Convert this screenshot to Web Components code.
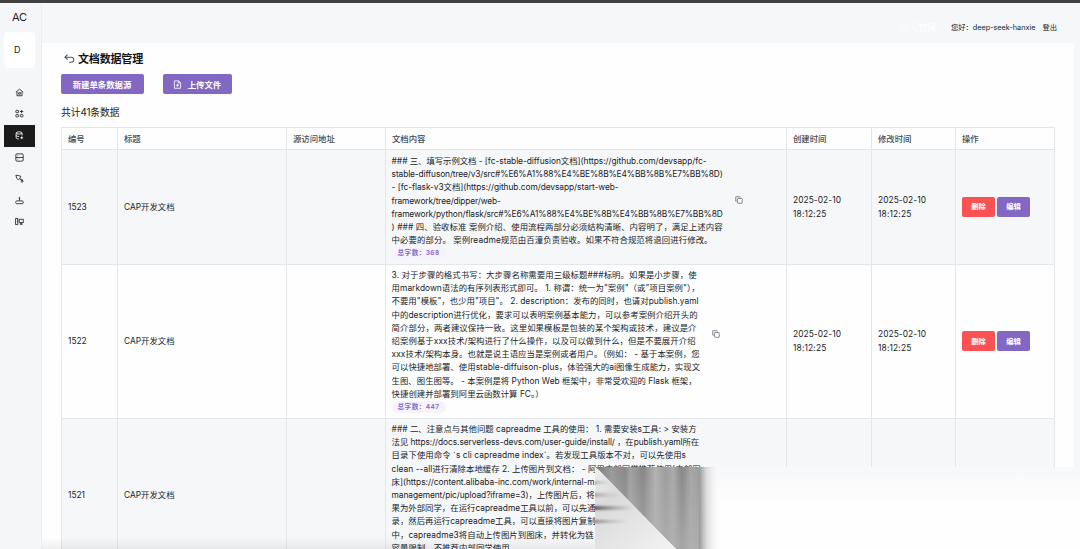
<!DOCTYPE html>
<html lang="zh-CN">
<head>
<meta charset="utf-8">
<title>文档数据管理</title>
<style>
  body {
    margin: 0;
    overflow: hidden;
    background: #f6f7f9;
    color: #202327;
    font-family: Inter, "Noto Sans CJK SC", sans-serif;
    font-size: 8.4px;
  }
</style>
</head>
<body>
<admin-page></admin-page>

<script>
const ROWS = [
  {
    id: '1523',
    title: 'CAP开发文档',
    count: 368,
    height: 115,
    time: ['2025-02-10', '18:12:25'],
    lines: [
      ['### 三、填写示例文档 - [fc-stable-diffusion文档](https://github.com/devsapp/fc-', 315],
      ['stable-diffuson/tree/v3/src#%E6%A1%88%E4%BE%8B%E4%BB%8B%E7%BB%8D)', 331],
      ['- [fc-flask-v3文档](https://github.com/devsapp/start-web-', 227],
      ['framework/tree/dipper/web-', 109],
      ['framework/python/flask/src#%E6%A1%88%E4%BE%8B%E4%BB%8B%E7%BB%8D', 331],
      [') ### 四、验收标准 案例介绍、使用流程两部分必须结构清晰、内容明了，满足上述内容', 331],
      ['中必要的部分。 案例readme规范由百潼负责验收。如果不符合规范将退回进行修改。', 321]
    ]
  },
  {
    id: '1522',
    title: 'CAP开发文档',
    count: 447,
    height: 154,
    time: ['2025-02-10', '18:12:25'],
    lines: [
      ['3. 对于步骤的格式书写：大步骤名称需要用三级标题###标明。如果是小步骤，使', 305],
      ['用markdown语法的有序列表形式即可。 1. 称谓：统一为"案例"（或"项目案例"），', 308],
      ['不要用"模板"，也少用"项目"。 2. description：发布的同时，也请对publish.yaml', 307],
      ['中的description进行优化，要求可以表明案例基本能力，可以参考案例介绍开头的', 306],
      ['简介部分，两者建议保持一致。这里如果模板是包装的某个架构或技术，建议是介', 305],
      ['绍案例基于xxx技术/架构进行了什么操作，以及可以做到什么，但是不要展开介绍', 304],
      ['xxx技术/架构本身。也就是说主语应当是案例或者用户。（例如： - 基于本案例，您', 308],
      ['可以快捷地部署、使用stable-diffuison-plus，体验强大的ai图像生成能力，实现文', 308.5],
      ['生图、图生图等。 - 本案例是将 Python Web 框架中，非常受欢迎的 Flask 框架，', 305],
      ['快捷创建并部署到阿里云函数计算 FC。）', 152]
    ]
  },
  {
    id: '1521',
    title: 'CAP开发文档',
    height: 154,
    lines: [
      ['### 二、注意点与其他问题 capreadme 工具的使用： 1. 需要安装s工具: > 安装方', 305],
      ['法见 https://docs.serverless-devs.com/user-guide/install/ ，在publish.yaml所在', 307.5],
      ['目录下使用命令 `s cli capreadme index`。若发现工具版本不对，可以先使用s', 294.5],
      ['clean --all进行清除本地缓存 2. 上传图片到文档： - 阿里内部同学推荐使用[内部图', 309],
      ['床](https://content.alibaba-inc.com/work/internal-m', 203],
      ['management/pic/upload?iframe=3)，上传图片后，将', 203],
      ['果为外部同学，在运行capreadme工具以前，可以先通', 204],
      ['录，然后再运行capreadme工具，可以直接将图片复制', 204],
      ['中，capreadme3将自动上传图片到图床，并转化为链', 202],
      ['容量限制，不推荐内部同学使用', 118]
    ]
  }
];

const ICONS = {
  home: '<path d="M1.5 7.5 8 2l6.5 5.5M3.5 6.5v7.3h9V6.5"/><path d="M6.5 8.3h3v2.6h-3z"/>',
  apps: '<rect x="1.5" y="2.5" width="4.8" height="4" rx="1"/><rect x="1.5" y="10" width="4.8" height="4" rx="1"/><rect x="9.4" y="10" width="4.8" height="4" rx="1"/><path d="M11.8 1.5v6M8.8 4.5h6"/>',
  data: '<ellipse cx="7.3" cy="3.5" rx="5.3" ry="2"/><path d="M2 3.5v8.7c0 1 2 1.8 4.8 2M12.6 3.5V8M2 7.8c0 1.3 2.8 2 5.3 1.9M12 9.5v5M9.5 12h5"/>',
  table: '<rect x="1.5" y="1.5" width="13" height="13" rx="2"/><path d="M1.5 8h13M4.5 5h1M4.5 11h1"/>',
  tool: '<path d="m1.5 2.2 4 .5 4.6 1.2-.6 3-3.5 3.5-3-2.7zM8 8l3.3 3.3"/><circle cx="12.5" cy="12.8" r="1.8"/><path d="m10.5 8.5 3.8 3"/>',
  tray: '<path d="M3 8.7h10c2.4 0 2.4 5 0 5H3c-2.4 0-2.4-5 0-5zM8 8.3V4.5"/><circle cx="8" cy="3.5" r="1"/>',
  device: '<path d="M1 2.5h4v11H1zM3.5 5H5M3.5 8H5M7.5 4h7.3v6H7.5zM9 13l2-3 2 3z"/>',
  back: '<path d="M5.3 2.5 1.2 6.1l4.1 3.7M1.5 6.1h9a3.6 3.6 0 0 1 0 7.4H7.6"/>',
  file: '<path d="M2.5 1.5h7.3L13.5 5v9.7h-11zM9.5 1.5V5.3h4M8 6.5v5.6M5.2 9.3h5.6"/>',
  copy: '<rect x="5" y="5" width="9.5" height="9.5" rx="1.2"/><path d="M3 10.5H1.5v-9h9V3"/>'
};

customElements.define('line-icon', class extends HTMLElement {
  connectedCallback() {
    this.attachShadow({ mode: 'open' }).innerHTML = `
      <style>
        :host { display: block; flex: none; width: var(--size, 9px); height: var(--size, 9px); }
        svg { display: block; width: 100%; height: 100%; fill: none; stroke: currentColor; stroke-width: 1.5; }
      </style>
      <svg viewBox="0 0 16 16">${ICONS[this.getAttribute('name')]}</svg>`;
  }
});

// one line of text, tracked so that it fills the given width
customElements.define('text-line', class extends HTMLElement {
  connectedCallback() {
    this.attachShadow({ mode: 'open' }).innerHTML = `
      <style>
        :host { display: block; }
        span { white-space: pre; }
      </style>
      <span><slot></slot></span>`;
    const width = parseFloat(this.getAttribute('width'));
    if (!width) return;
    const span = this.shadowRoot.querySelector('span');
    const natural = span.getBoundingClientRect().width;
    span.style.letterSpacing = (width - natural) / this.textContent.length + 'px';
  }
});

customElements.define('app-button', class extends HTMLElement {
  connectedCallback() {
    this.attachShadow({ mode: 'open' }).innerHTML = `
      <style>
        :host {
          display: flex;
          align-items: center;
          justify-content: center;
          gap: 6px;
          box-sizing: border-box;
          width: 33px;
          height: 20px;
          border-radius: 2px;
          background: #8268c2;
          color: #fff;
          font-size: 7.3px;
          font-weight: 600;
        }
        :host([kind=danger]) { background: #fa5252; }
        :host([large]) { font-size: 8.4px; padding-right: 1px; }
      </style>
      <slot></slot>`;
  }
});

customElements.define('side-bar', class extends HTMLElement {
  connectedCallback() {
    const names = ['home', 'apps', 'data', 'table', 'tool', 'tray', 'device'];
    this.attachShadow({ mode: 'open' }).innerHTML = `
      <style>
        :host {
          display: flex;
          flex-direction: column;
          box-sizing: border-box;
          width: 42px;
          padding-left: 4px;
          border-right: 1px solid #eceef0;
          background: #f5f6f8;
        }
        .logo { width: 31px; height: 29px; line-height: 28px; text-align: center; font-size: 11px; }
        .team {
          width: 31px;
          height: 36px;
          margin-bottom: 14px;
          border-radius: 4px;
          background: #fff;
          line-height: 36px;
          text-indent: 10px;
          font-size: 9px;
        }
        .item { display: grid; place-items: center; box-sizing: border-box; width: 31px; height: 21.6px; padding-bottom: 1px; }
        .item.active { background: #1b1b1c; color: #fff; }
      </style>
      <div class="logo">AC</div>
      <div class="team">D</div>
      ${names.map(name => `<div class="item ${name == 'data' ? 'active' : ''}"><line-icon name="${name}"></line-icon></div>`).join('')}`;
  }
});

customElements.define('top-bar', class extends HTMLElement {
  connectedCallback() {
    this.attachShadow({ mode: 'open' }).innerHTML = `
      <style>
        :host {
          display: flex;
          justify-content: flex-end;
          align-items: center;
          box-sizing: border-box;
          height: 40px;
          padding: 10px 23px 0 0;
          line-height: 12px;
          font-size: 7.3px;
        }
        .site { color: #fff; margin-right: 15px; font-size: 8.8px; }
        .user { margin-right: 7px; }
      </style>
      <text-line class="site">访问官网</text-line>
      <text-line class="user" width="84.5">您好：deep-seek-hanxie</text-line>
      <text-line>登出</text-line>`;
  }
});

customElements.define('doc-cell', class extends HTMLElement {
  set row(row) {
    this.attachShadow({ mode: 'open' }).innerHTML = `
      <style>
        :host { display: flex; align-items: center; }
        .lines { line-height: 13.2px; }
        .foot { height: 13px; }
        .count {
          display: block;
          width: 42px;
          height: 12px;
          padding: 0 6px;
          border-radius: 6px;
          background: #f7f3fd;
          color: #8567cb;
          line-height: 13px;
          font-size: 6.6px;
          font-weight: 600;
        }
        line-icon { --size: 8px; margin: 0 0 15px 12px; color: #5f6670; }
      </style>
      <div>
        <div class="lines">${row.lines.map(([text, width]) => `<text-line width="${width}">${text}</text-line>`).join('')}</div>
        <div class="foot">${row.count ? `<text-line class="count" width="42">总字数：${row.count}</text-line>` : ''}</div>
      </div>
      ${row.count ? '<line-icon name="copy"></line-icon>' : ''}`;
  }
});

customElements.define('data-table', class extends HTMLElement {
  connectedCallback() {
    const heads = ['编号', '标题', '源访问地址', '文档内容', '创建时间', '修改时间', '操作'];
    this.attachShadow({ mode: 'open' }).innerHTML = `
      <style>
        :host { display: block; width: 994px; box-sizing: border-box; border: 1px solid #e3e6ea; border-bottom: 0; }
        .row {
          display: grid;
          grid-template-columns: 56px 169px 99px 401px 85px 84px 98px;
          grid-template-rows: 100%;
          box-sizing: border-box;
          border-bottom: 1px solid #e3e6ea;
        }
        .row > * {
          display: flex;
          flex-direction: column;
          justify-content: center;
          box-sizing: border-box;
          min-width: 0;
          padding-left: 6px;
          border-right: 1px solid #e3e6ea;
          line-height: 13.3px;
        }
        .row > *:last-child { border-right: 0; }
        .row > doc-cell { flex-direction: row; justify-content: flex-start; padding-left: 5.6px; }
        .head { height: 22px; color: #454b53; font-weight: 500; }
        .head > *, .head + .row > *:not(.actions) { padding-top: 1.4px; }
        .odd { background: #f6f7f9; }
        .row > .actions { flex-direction: row; justify-content: flex-start; align-items: center; gap: 2px; padding-bottom: .6px; }
      </style>
      <div class="row head">${heads.map(text => `<div>${text}</div>`).join('')}</div>
      ${ROWS.map((row, i) => `
        <div class="row ${i % 2 ? '' : 'odd'}" style="height: ${row.height}px">
          <div>${row.id}</div>
          <div>${row.title}</div>
          <div></div>
          <doc-cell></doc-cell>
          ${`<div>${row.time ? row.time.map(t => `<text-line width="${t.length > 8 ? 48 : 33.5}">${t}</text-line>`).join('') : ''}</div>`.repeat(2)}
          <div class="actions">${row.time ? '<app-button kind="danger">删除</app-button><app-button>编辑</app-button>' : ''}</div>
        </div>`).join('')}`;
    this.shadowRoot.querySelectorAll('doc-cell').forEach((cell, i) => {
      cell.row = ROWS[i];
    });
  }
});

// smudged area laid over the lower right part of the table
customElements.define('smudge-layer', class extends HTMLElement {
  connectedCallback() {
    this.attachShadow({ mode: 'open' }).innerHTML = `
      <style>
        :host { position: absolute; left: 595px; top: 464px; width: 485px; height: 82px; }
        svg { display: block; }
      </style>
      <svg width="485" height="82">
        <defs>
          <linearGradient id="page" x2="0" y2="1">
            <stop offset="0" stop-color="#f7f8fa"/>
            <stop offset=".45" stop-color="#fefefe"/>
            <stop offset="1" stop-color="#fefefe"/>
          </linearGradient>
          <linearGradient id="streaks">
            <stop offset="0" stop-color="#777"/>
            <stop offset=".13" stop-color="#999"/>
            <stop offset=".24" stop-color="#888"/>
            <stop offset=".28" stop-color="#a2a2a2"/>
            <stop offset=".38" stop-color="#858585"/>
            <stop offset=".48" stop-color="#b2b2b2"/>
            <stop offset=".56" stop-color="#9c9c9c"/>
            <stop offset=".62" stop-color="#aaa"/>
            <stop offset=".69" stop-color="#868686"/>
            <stop offset=".76" stop-color="#a6a6a6"/>
            <stop offset=".83" stop-color="#9c9c9c"/>
            <stop offset=".88" stop-color="#d4d4d5" stop-opacity=".9"/>
            <stop offset="1" stop-color="#fefefe" stop-opacity="0"/>
          </linearGradient>
          <linearGradient id="fade" x2="0" y2="1">
            <stop offset="0" stop-color="#b4b4b4" stop-opacity="0"/>
            <stop offset="1" stop-color="#b4b4b4" stop-opacity=".7"/>
          </linearGradient>
          <linearGradient id="low" x2=".9" y2="1">
            <stop offset="0" stop-color="#f0f0f1"/>
            <stop offset=".3" stop-color="#dadadb"/>
            <stop offset="1" stop-color="#f3f3f4"/>
          </linearGradient>
          <linearGradient id="trail">
            <stop offset="0" stop-color="#444"/>
            <stop offset="1" stop-color="#999" stop-opacity="0"/>
          </linearGradient>
          <filter id="soft" x="-20%" y="-150%" width="140%" height="400%"><feGaussianBlur stdDeviation="1 1.3"/></filter>
          <clipPath id="wedge"><path d="M0 0 4 3 81 82H0z"/></clipPath>
        </defs>
        <rect width="485" height="82" fill="url(#page)"/>
        <path d="M0 0H126V82H81z" fill="url(#streaks)"/>
        <path d="M0 0H104V82H81z" fill="url(#fade)"/>
        <g clip-path="url(#wedge)">
          <rect width="90" height="82" fill="url(#low)"/>
          <g fill="url(#trail)">
            <rect x="-2" y="14" width="18" height="3" opacity=".4" filter="url(#soft)"/>
            <rect x="-2" y="26" width="26" height="4" opacity=".4" filter="url(#soft)"/>
            <rect x="-2" y="39" width="42" height="4" opacity=".9" filter="url(#soft)"/>
            <rect x="-2" y="53" width="36" height="3" opacity=".6" filter="url(#soft)"/>
          </g>
        </g>
      </svg>`;
  }
});

customElements.define('admin-page', class extends HTMLElement {
  connectedCallback() {
    this.attachShadow({ mode: 'open' }).innerHTML = `
      <style>
        :host { display: flex; position: relative; box-sizing: border-box; height: 549px; border-top: 3px solid #414141; overflow: hidden; }
        side-bar { flex: none; }
        .main { flex: 1; min-width: 0; }
        .content { box-sizing: border-box; width: 1032px; height: 506px; padding: 8px 0 0 19px; background: #fefefe; }
        .title { display: flex; align-items: center; gap: 3px; padding-left: 3px; height: 15px; font-size: 11px; font-weight: 600; color: #141517; }
        .title line-icon { --size: 11px; color: #555; }
        .title text-line { line-height: 15px; padding-top: 1.5px; }
        .tools { display: flex; gap: 19px; margin: 8px 0 11px; }
        .total { height: 15px; margin-bottom: 7px; line-height: 15px; font-size: 9.8px; }
        .shade { position: absolute; left: 42px; right: 400px; bottom: 0; height: 12px; background: linear-gradient(transparent, rgba(0, 0, 0, .06)); }
      </style>
      <side-bar></side-bar>
      <div class="main">
        <top-bar></top-bar>
        <div class="content">
          <div class="title"><line-icon name="back"></line-icon><text-line width="65">文档数据管理</text-line></div>
          <div class="tools">
            <app-button large style="width: 83px">新建单条数据源</app-button>
            <app-button large style="width: 69px"><line-icon name="file"></line-icon>上传文件</app-button>
          </div>
          <div class="total"><text-line width="58.5">共计41条数据</text-line></div>
          <data-table></data-table>
        </div>
      </div>
      <div class="shade"></div>
      <smudge-layer></smudge-layer>`;
  }
});
</script>
</body>
</html>
